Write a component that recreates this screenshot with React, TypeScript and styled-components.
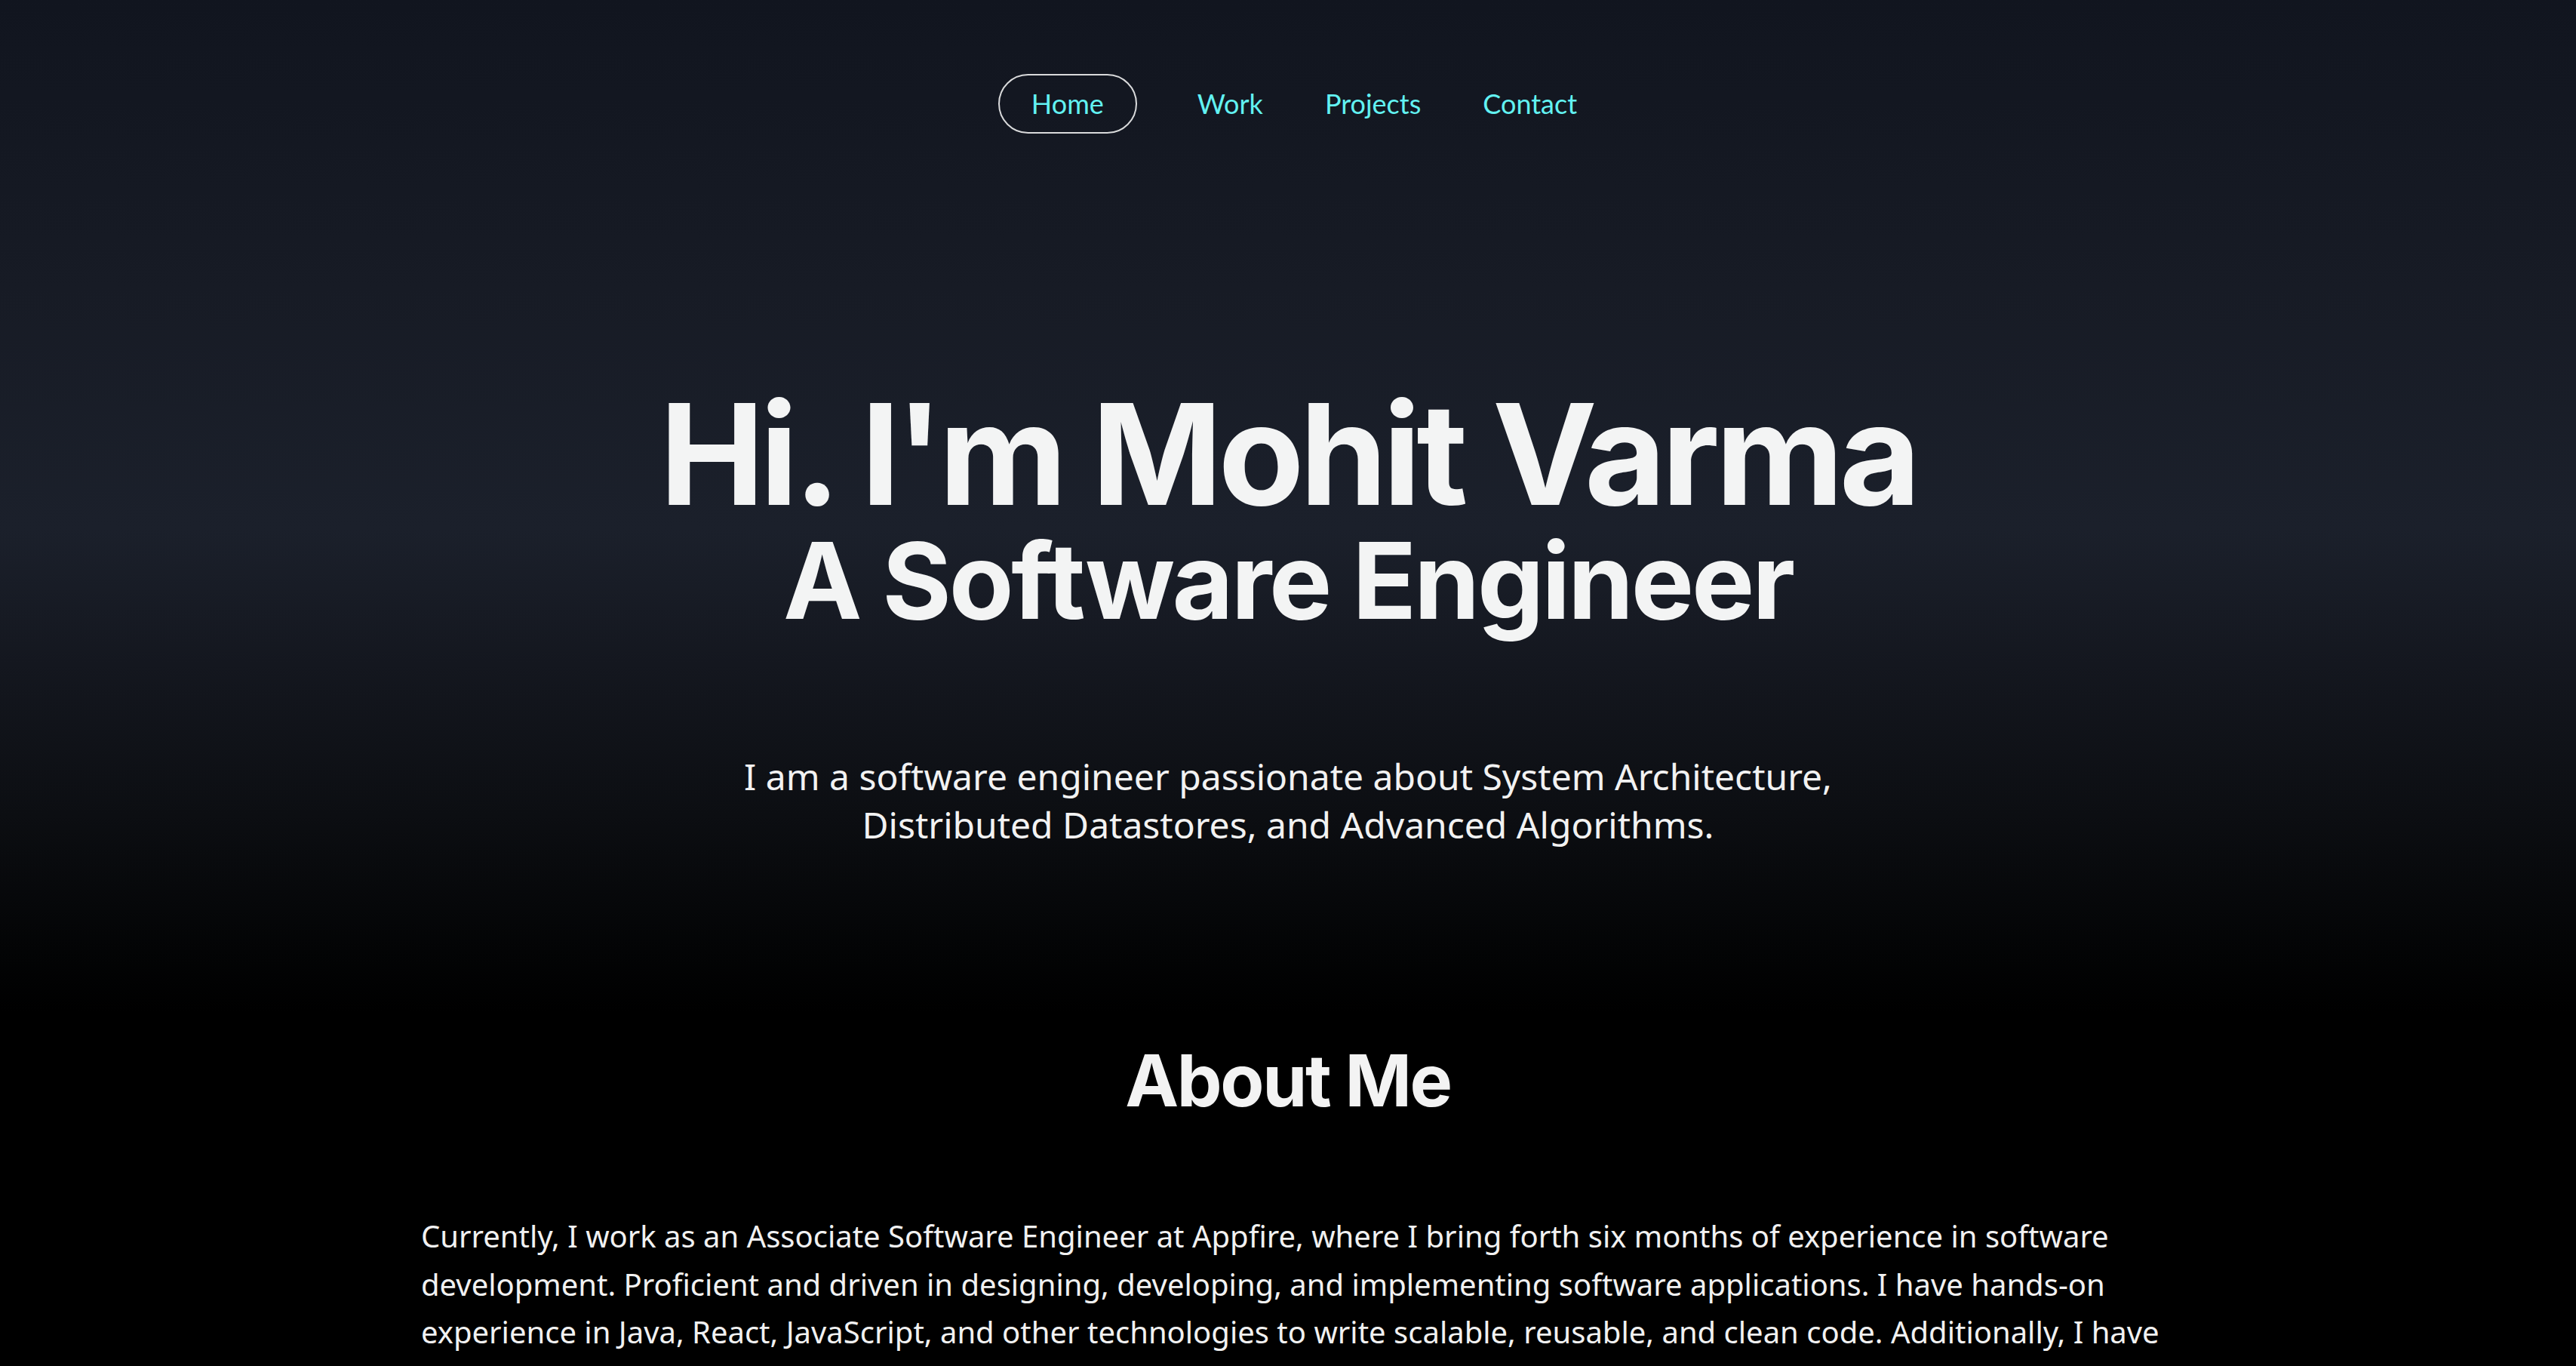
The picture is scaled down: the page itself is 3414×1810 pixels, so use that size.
import React from "react";
import styled, { createGlobalStyle } from "styled-components";

const GlobalStyle = createGlobalStyle`
  html, body {
    margin: 0;
    padding: 0;
  }
  body {
    min-height: 100vh;
    background: linear-gradient(
      to bottom,
      #11151f 0px,
      #171b25 380px,
      #1b202b 700px,
      #14171f 880px,
      #0c0e12 1080px,
      #030405 1260px,
      #000000 1340px
    );
    background-color: #000;
    color: #f2f3f3;
  }
`;

const Page = styled.div`
  display: flex;
  flex-direction: column;
  align-items: center;
  min-height: 100vh;
`;

const NavBar = styled.nav`
  width: 100%;
  display: flex;
  justify-content: center;
  padding-top: 98px;
`;

const NavList = styled.ul`
  display: flex;
  align-items: center;
  list-style: none;
  margin: 0;
  padding: 0 0 0 40px;
`;

const NavItem = styled.li<{ $active?: boolean }>`
  margin-right: ${(p) => (p.$active ? "39px" : "0")};
`;

const NavLink = styled.a<{ $active?: boolean }>`
  display: block;
  font-family: Lato, "Liberation Sans", sans-serif;
  font-size: 36px;
  line-height: 43px;
  color: #62f2f2;
  text-decoration: none;
  padding: ${(p) => (p.$active ? "16px 42px" : "18px 41px")};
  border: ${(p) => (p.$active ? "2px solid #d9dadb" : "none")};
  border-radius: 40px;
`;

const Hero = styled.header`
  display: flex;
  flex-direction: column;
  align-items: center;
  margin-top: 332px;
`;

const Title = styled.h1`
  margin: 0;
  font-family: Inter, "Liberation Sans", sans-serif;
  font-weight: 700;
  text-align: center;
  color: #f3f4f4;
  display: flex;
  flex-direction: column;
  align-items: center;
`;

const TitleLine = styled.span<{ $size: number; $gap?: number; $track: number }>`
  display: block;
  font-size: ${(p) => p.$size}px;
  line-height: 1;
  letter-spacing: ${(p) => p.$track}em;
  margin-top: ${(p) => p.$gap ?? 0}px;
  white-space: nowrap;
`;

const Tagline = styled.p`
  margin: 158px 0 0;
  max-width: 1500px;
  font-family: "Noto Sans", "Open Sans", sans-serif;
  font-size: 48px;
  line-height: 64px;
  text-align: center;
  color: #f2f2f2;
`;

const About = styled.section`
  display: flex;
  flex-direction: column;
  align-items: center;
  width: 100%;
  margin-top: 259px;
`;

const SectionTitle = styled.h2`
  margin: 0;
  font-family: Inter, "Liberation Sans", sans-serif;
  font-weight: 700;
  font-size: 95px;
  line-height: 1;
  letter-spacing: -0.025em;
  color: #f3f3f3;
`;

const Body = styled.p`
  margin: 127px 0 0 22px;
  width: 2320px;
  font-family: "Noto Sans", "Open Sans", sans-serif;
  font-size: 40px;
  line-height: 63.5px;
  color: #f1f1f1;
`;

export default function App() {
  return (
    <>
      <GlobalStyle />
      <Page>
        <NavBar>
          <NavList>
            <NavItem $active>
              <NavLink href="#home" $active>
                Home
              </NavLink>
            </NavItem>
            <NavItem>
              <NavLink href="#work">Work</NavLink>
            </NavItem>
            <NavItem>
              <NavLink href="#projects">Projects</NavLink>
            </NavItem>
            <NavItem>
              <NavLink href="#contact">Contact</NavLink>
            </NavItem>
          </NavList>
        </NavBar>
        <Hero>
          <Title>
            <TitleLine $size={186} $track={-0.031}>
              Hi. I'm Mohit Varma
            </TitleLine>
            <TitleLine $size={140} $gap={4} $track={-0.023}>
              A Software Engineer
            </TitleLine>
          </Title>
          <Tagline>
            I am a software engineer passionate about System Architecture,
            Distributed Datastores, and Advanced Algorithms.
          </Tagline>
        </Hero>
        <About>
          <SectionTitle>About Me</SectionTitle>
          <Body>
            Currently, I work as an Associate Software Engineer at Appfire,
            where I bring forth six months of experience in software
            development. Proficient and driven in designing, developing, and
            implementing software applications. I have hands-on experience in
            Java, React, JavaScript, and other technologies to write scalable,
            reusable, and clean code. Additionally, I have a strong foundation
            in data structures, algorithms, and system design, and I enjoy
            solving challenging problems.
          </Body>
        </About>
      </Page>
    </>
  );
}
